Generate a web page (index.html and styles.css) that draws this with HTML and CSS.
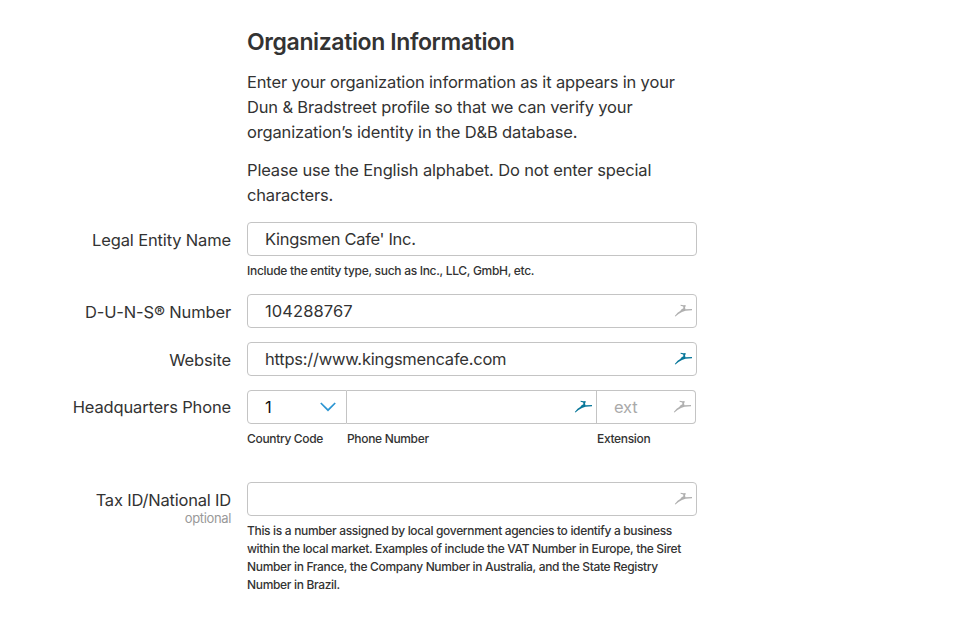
FILE: index.html
```html
<!DOCTYPE html>
<html lang="en">
<head>
<meta charset="utf-8">
<title>Organization Information</title>
<link rel="stylesheet" href="styles.css">
</head>
<body>
<svg class="defs" width="0" height="0"><symbol id="bird" viewBox="0 0 18 14"><path d="M.8 12 L3.6 8.8 L6.2 7 L7.6 5.2 L9.4 4.2 L9.2 2.6 L6.6 1.7 V.8 L9.6 1.2 L11.6 .9 V2.6 L11 3 L11.4 5.2 L18 5.1 V6.2 L11.5 6.8 L8 8 L4.5 9.9 L1.4 12.4Z"/></symbol></svg>
<main class="form">
  <header class="intro">
    <h1>Organization Information</h1>
    <p>Enter your organization information as it appears in your<br>Dun &amp; Bradstreet profile so that we can verify your<br>organization’s identity in the D&amp;B database.</p>
    <p>Please use the English alphabet. Do not enter special<br>characters.</p>
  </header>
  <section class="row entity">
    <label>Legal Entity Name</label>
    <div class="control"><div class="field"><span class="name">Kingsmen Cafe' Inc.</span></div><p class="hint">Include the entity type, such as Inc., LLC, GmbH, etc.</p></div>
  </section>
  <section class="row duns">
    <label>D-U-N-S® Number</label>
    <div class="control"><div class="field"><span class="digits">104288767</span><svg class="bird"><use href="#bird"/></svg></div></div>
  </section>
  <section class="row website">
    <label>Website</label>
    <div class="control"><div class="field"><span class="url">https://www.kingsmencafe.com</span><svg class="bird active"><use href="#bird"/></svg></div></div>
  </section>
  <section class="row phone">
    <label>Headquarters Phone</label>
    <div class="control phones">
      <div class="code"><div class="field"><span>1</span><svg class="chevron" viewBox="0 0 16 10"><path d="M.8 1l7.2 7.2L15.2 1"/></svg></div><p class="hint">Country Code</p></div>
      <div class="number"><div class="field"><span></span><svg class="bird active"><use href="#bird"/></svg></div><p class="hint">Phone Number</p></div>
      <div class="ext"><div class="field"><span class="placeholder">ext</span><svg class="bird"><use href="#bird"/></svg></div><p class="hint">Extension</p></div>
    </div>
  </section>
  <section class="row tax">
    <label>Tax ID/National ID<small>optional</small></label>
    <div class="control"><div class="field"><span></span><svg class="bird"><use href="#bird"/></svg></div><p class="hint">This is a number assigned by local government agencies to identify a business<br>within the local market. Examples of include the VAT Number in Europe, the Siret<br>Number in France, the Company Number in Australia, and the State Registry<br>Number in Brazil.</p></div>
  </section>
</main>
</body>
</html>
```
FILE: styles.css
```css
* { box-sizing: border-box; }
body { margin: 0; background: #fff; color: #333; font: 16.5px/25px Inter, sans-serif; }
.defs { display: block; }
.form { width: 697px; padding-top: 27px; }
.intro { margin-left: 247px; white-space: nowrap; }
h1 { margin: 0 0 13px; font-size: 23px; line-height: 30px; font-weight: 600; letter-spacing: -.38px; }
p { margin: 0 0 13px; letter-spacing: -.16px; }
.row { display: grid; grid-template-columns: 231px 450px; column-gap: 16px; white-space: nowrap; }
.entity { height: 72px; margin-top: 14px; }
.duns, .website { height: 48px; }
.phone { height: 92px; }
label { text-align: right; padding-top: 6px; letter-spacing: -.15px; }
.phone label { padding-top: 5px; }
.tax label { letter-spacing: -.2px; }
small { display: block; font-size: 13px; line-height: 14px; color: #999; margin-top: -2px; letter-spacing: -.35px; }
.field { display: flex; height: 34px; align-items: center; justify-content: space-between; border: 1px solid #c4c4c4; border-radius: 4px; padding: 0 4px 0 17px; }
.name { letter-spacing: -.32px; }
.digits { letter-spacing: .08px; }
.url { letter-spacing: -.23px; }
.hint { margin: 6px 0 0; font-size: 12px; line-height: 18px; letter-spacing: -.33px; font-weight: 500; }
.entity .hint { letter-spacing: -.3px; }
.bird { width: 18px; height: 14px; fill: #b0b0b0; }
.active { fill: #08779a; }
.phones { display: grid; grid-template-columns: 100px 250px 99px; }
.code .field { border-radius: 4px 0 0 4px; padding-right: 10px; color: #111; }
.number .field { border-left: 0; border-radius: 0; }
.ext .field { border-left: 0; border-radius: 0 4px 4px 0; color: #aaa; }
.placeholder { letter-spacing: -.2px; }
.chevron { width: 16px; height: 10px; fill: none; stroke: #2c95d2; stroke-width: 1.7; }
```
